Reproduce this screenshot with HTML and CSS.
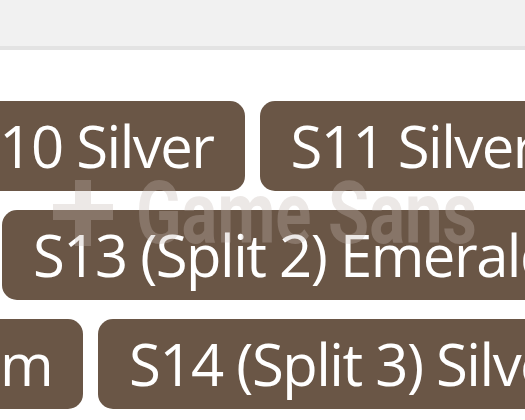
FILE: index.html
```html
<!DOCTYPE html>
<html lang="en">

<head>
  <meta charset="UTF-8" />
  <meta name="viewport" content="width=device-width, initial-scale=1.0" />
  <title>Rank history</title>
  <link rel="stylesheet" href="styles.css">
</head>

<body>
  <div class="topbar"></div>

  <div class="ranks">
    <div class="rank-row row-first">
      <span class="rank">S10 Silver</span>
      <span class="rank">S11 Silver</span>
    </div>
    <div class="rank-row row-second">
      <span class="rank">S13 (Split 2) Emerald</span>
    </div>
    <div class="rank-row row-third">
      <span class="rank">S12 Platinum</span>
      <span class="rank">S14 (Split 3) Silver</span>
    </div>

    <div class="watermark">
      <svg class="watermark-icon" viewBox="0 0 60 66" aria-hidden="true">
        <path d="M22 0h16v24h22v16H38v26H22V40H0V24h22z" />
      </svg>
      <span class="watermark-text">Game Sans</span>
    </div>
  </div>
</body>

</html>
```

FILE: styles.css
```css
* {
  box-sizing: border-box;
}

body {
  margin: 0;
  background: #ffffff;
  font-family: 'Open Sans', 'Noto Sans', sans-serif;
  overflow: hidden;
  height: 420px;
}

.topbar {
  height: 50px;
  background: #f1f1f1;
  border-bottom: 4px solid #e3e3e3;
}

.ranks {
  position: relative;
  padding-top: 51px;
  display: flex;
  flex-direction: column;
  gap: 19px;
}

.rank-row {
  display: flex;
  gap: 15px;
  white-space: nowrap;
}

.row-first {
  margin-left: -62px;
}

.row-second {
  margin-left: 2px;
}

.row-third {
  margin-left: -316px;
}

.rank {
  flex: none;
  display: inline-block;
  height: 90px;
  line-height: 90px;
  padding: 0 31px;
  background: #6a5646;
  border-radius: 15px;
  color: #ffffff;
  font-size: 58px;
  letter-spacing: -1.5px;
}

/* faint site stamp laid over the badges */
.watermark {
  position: absolute;
  left: 52px;
  top: 128px;
  display: flex;
  align-items: center;
  gap: 22px;
  white-space: nowrap;
  color: rgba(195, 185, 178, 0.32);
  pointer-events: none;
}

.watermark-icon {
  flex: none;
  width: 62px;
  height: 66px;
  fill: rgba(195, 185, 178, 0.32);
}

.watermark-text {
  display: inline-block;
  font-family: Roboto, sans-serif;
  font-weight: 700;
  font-size: 88px;
  line-height: 70px;
  transform: scaleX(0.76);
  transform-origin: left center;
}
```
